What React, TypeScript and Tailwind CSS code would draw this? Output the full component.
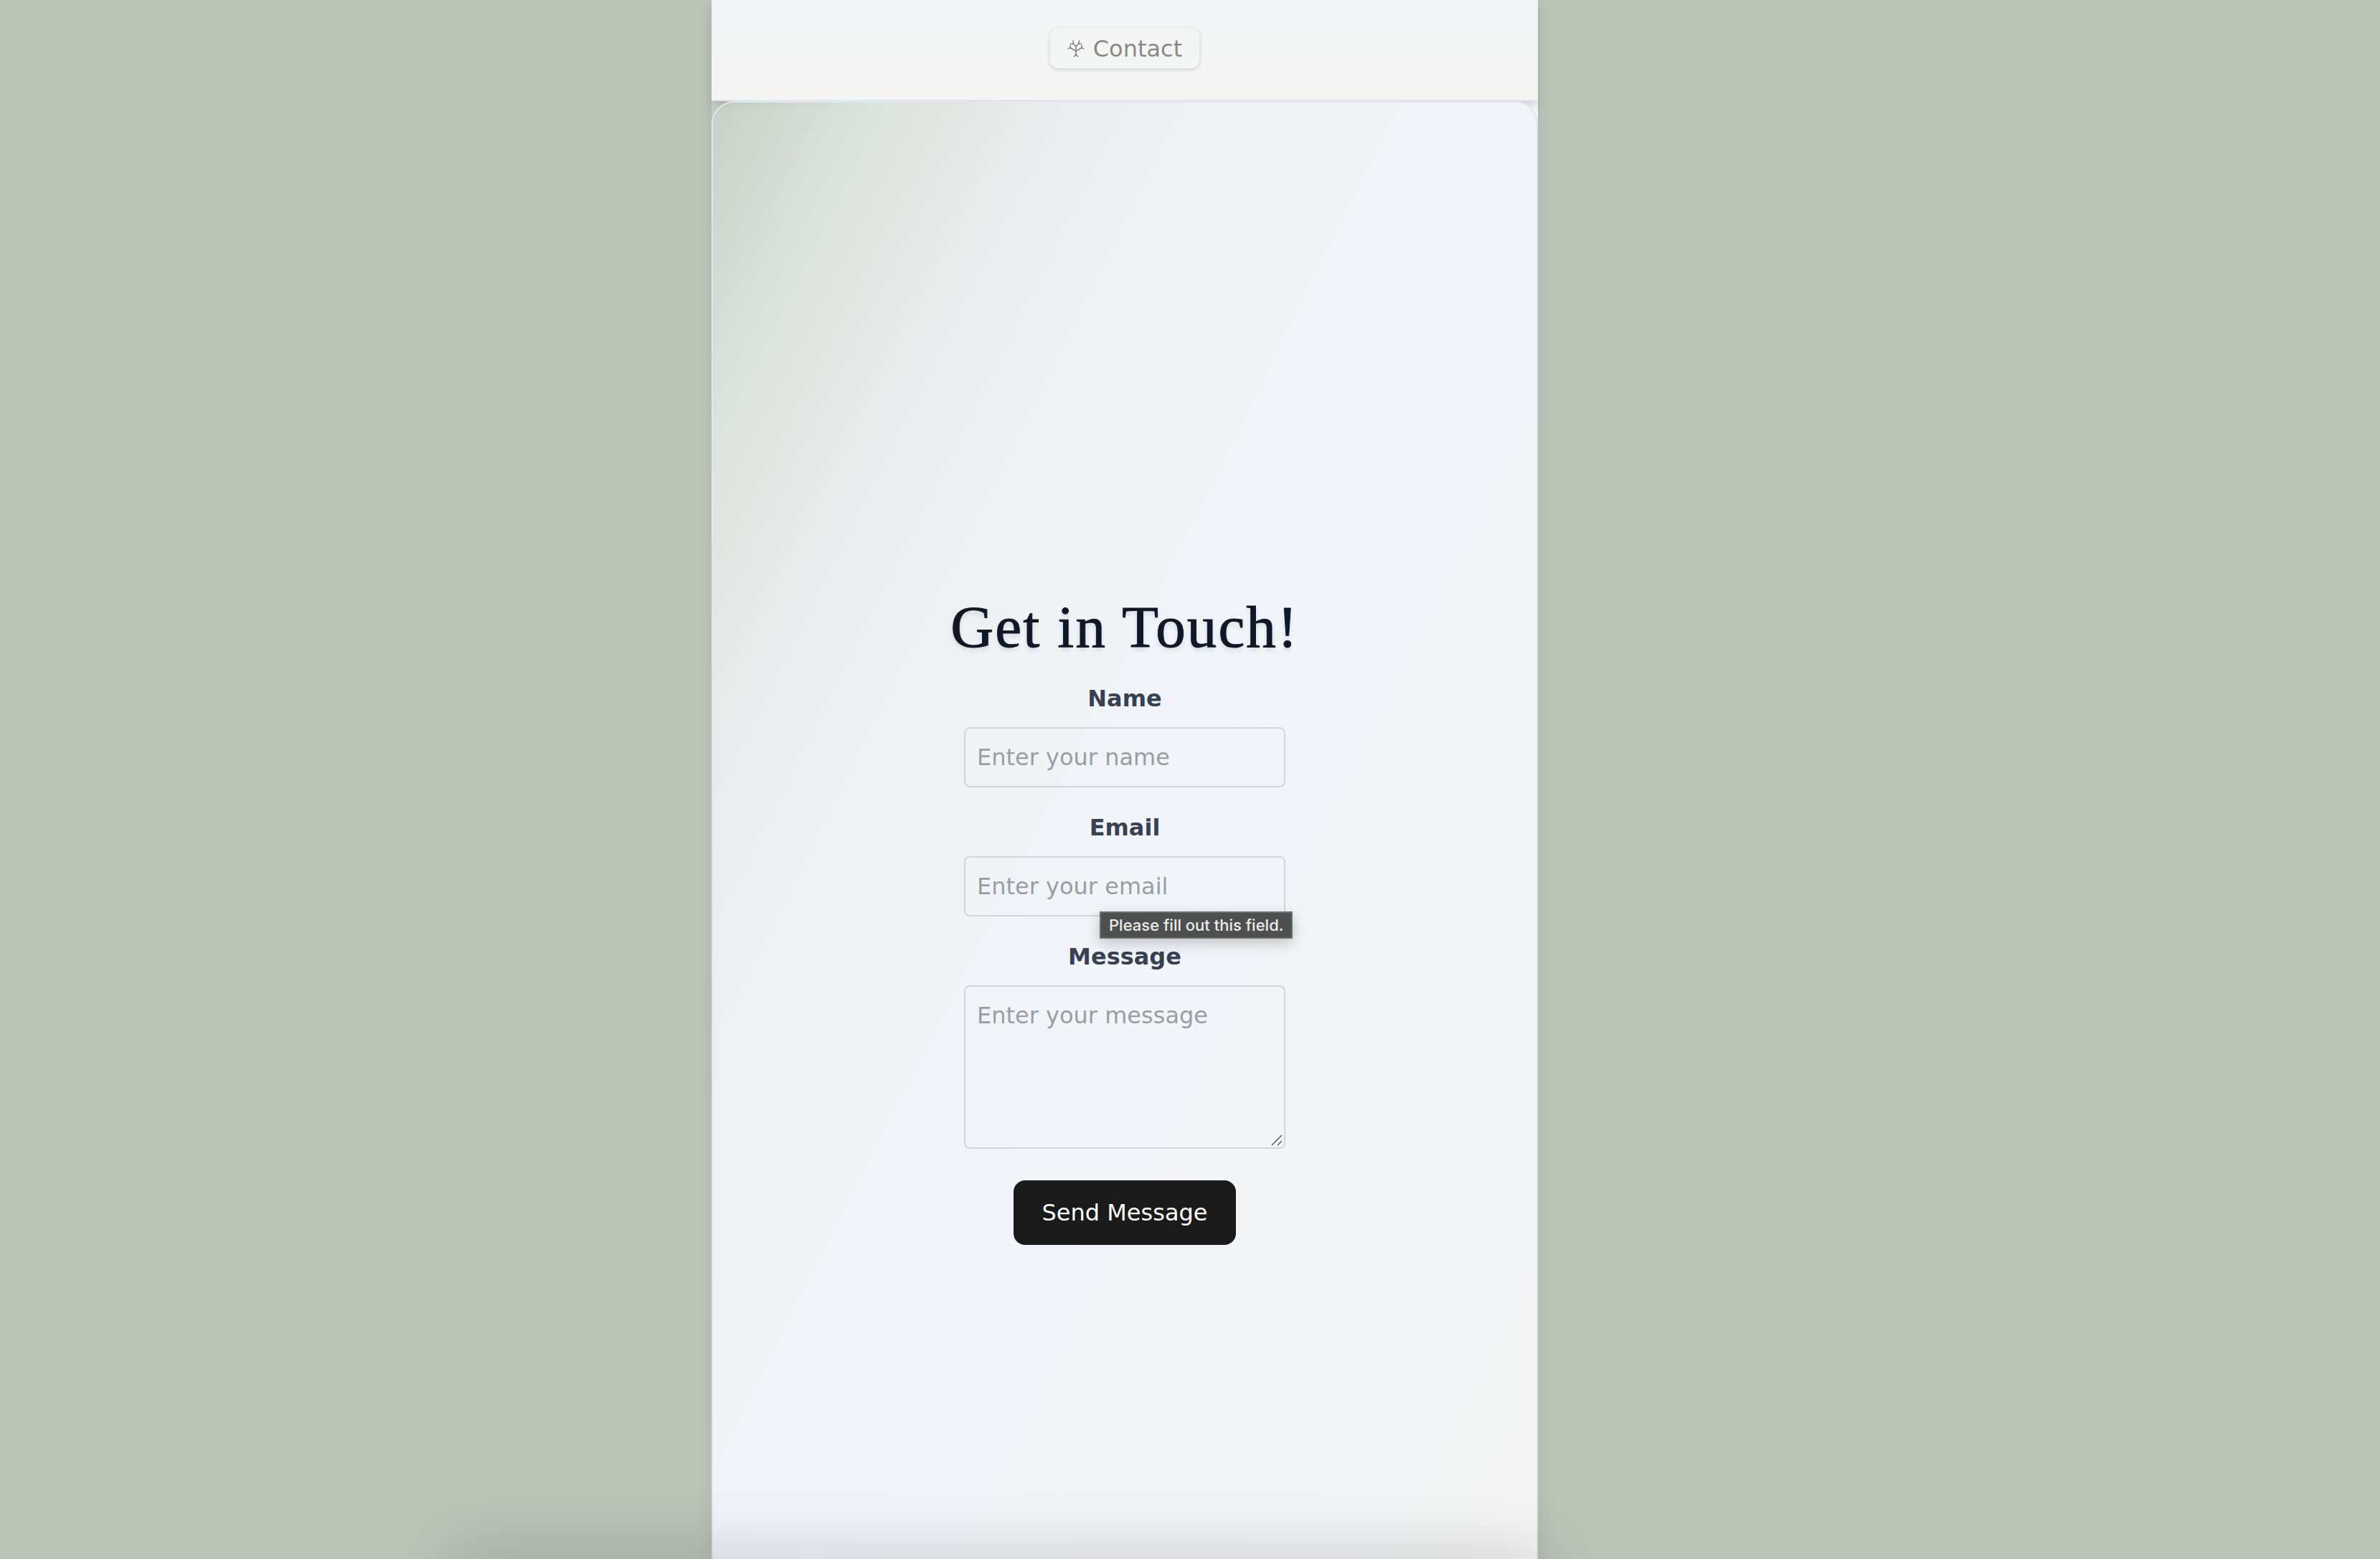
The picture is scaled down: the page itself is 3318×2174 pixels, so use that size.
import React from "react";

const fieldClass =
  "block w-full rounded-lg border-2 border-gray-300 bg-transparent px-4 py-4 text-[32px] leading-[48px] text-gray-700 placeholder:text-[#989fa4] placeholder:opacity-100";
const labelClass = "mb-4 block text-center text-[32px] leading-[48px] font-bold text-[#374151]";

function TreeIcon() {
  return (
    <svg
      viewBox="0 0 72 72"
      className="h-6 w-6"
      fill="none"
      stroke="currentColor"
      strokeWidth="5"
      strokeLinecap="round"
      strokeLinejoin="round"
      aria-hidden="true"
    >
      <path d="M36 27v33M36 60l-8 9M36 60l8 9" />
      <path d="M36 46L14 33L4 35M14 33L11 22" />
      <path d="M36 46L58 33L68 35M58 33L61 22" />
      <path d="M36 27L26 16L14 15M26 16L24 3" />
      <path d="M36 27L46 16L58 15M46 16L50 3" />
    </svg>
  );
}

export default function App() {
  return (
    <div className="relative flex min-h-screen justify-center overflow-hidden bg-[#bcc4b8] pr-[182px] font-['Verdana','DejaVu_Sans',sans-serif]">
      <div className="flex w-full max-w-6xl flex-col bg-linear-to-r from-[#c6cec4] to-[#f4f5f6] shadow-[0_8px_24px_rgba(0,0,0,0.08)]">
        <nav className="flex justify-center border-b-2 border-[#e1e6ef] bg-linear-to-b from-[#f4f5f7] to-[#f5f5f4] pt-[39px] pb-11 shadow-[0_8px_12px_-4px_rgba(0,0,0,0.18)]">
          <a
            href="#contact"
            className="flex items-center gap-3 rounded-xl bg-[#f4f6f5] px-6 pt-0.5 text-[32px] leading-[54px] text-[#8b8984] shadow-[0_2px_6px_rgba(0,0,0,0.15)]"
          >
            <TreeIcon />
            Contact
          </a>
        </nav>
        <main
          id="contact"
          className="flex flex-1 flex-col items-center rounded-t-[32px] border-2 border-b-0 border-[#e1e6ef] bg-[linear-gradient(to_bottom_right,#cad2c799_0%,#dce2dd_10%,#e6eae9_18%,#ecf0f1_27%,#f0f4f7_38%,#f1f5fa_50%,#f3f4f7_70%,#f5f5f4_100%)] bg-[size:100%_2286px] px-8 pt-[691px]"
        >
          <h1 className="mb-9 text-center font-['Georgia','Liberation_Serif',serif] text-[83px] leading-[80px] tracking-wide text-gray-900 [-webkit-text-stroke:1px_currentColor] [text-shadow:0_4px_6px_rgba(0,0,0,0.12)]">
            Get in Touch!
          </h1>
          <form className="flex w-full max-w-md flex-col items-center gap-8">
            <div className="w-full">
              <label htmlFor="name" className={labelClass}>
                Name
              </label>
              <input id="name" type="text" placeholder="Enter your name" className={fieldClass} />
            </div>
            <div className="relative w-full">
              <label htmlFor="email" className={labelClass}>
                Email
              </label>
              <input id="email" type="email" placeholder="Enter your email" className={fieldClass} />
              <div
                role="tooltip"
                className="absolute top-[141px] left-[189px] border-2 border-[#6d6e6e] bg-[#4e4f4f] px-[11px] font-['Inter',sans-serif] text-[22px] leading-[34px] font-medium whitespace-nowrap text-[#ececea] shadow-[0_6px_20px_rgba(0,0,0,0.22)]"
              >
                Please fill out this field.
              </div>
            </div>
            <div className="w-full">
              <label htmlFor="message" className={labelClass}>
                Message
              </label>
              <div className="relative">
                <textarea
                  id="message"
                  rows={4}
                  placeholder="Enter your message"
                  className={`${fieldClass} resize-none`}
                />
                <svg viewBox="0 0 16 16" className="absolute right-1 bottom-1 h-4 w-4" stroke="#4b4e52" strokeWidth="1.3" aria-hidden="true">
                  <path d="M1 15L15 1M9 15L15 9" />
                </svg>
              </div>
            </div>
            <button type="submit" className="mt-3 rounded-2xl bg-[#1a1a1a] px-[39px] py-[21px] text-[32px] leading-[48px] text-white">
              Send Message
            </button>
          </form>
        </main>
      </div>
      <div className="pointer-events-none absolute -bottom-10 left-[19%] h-10 w-[46%] shadow-[0_0_90px_0_rgba(0,0,0,0.26)]" />
    </div>
  );
}
